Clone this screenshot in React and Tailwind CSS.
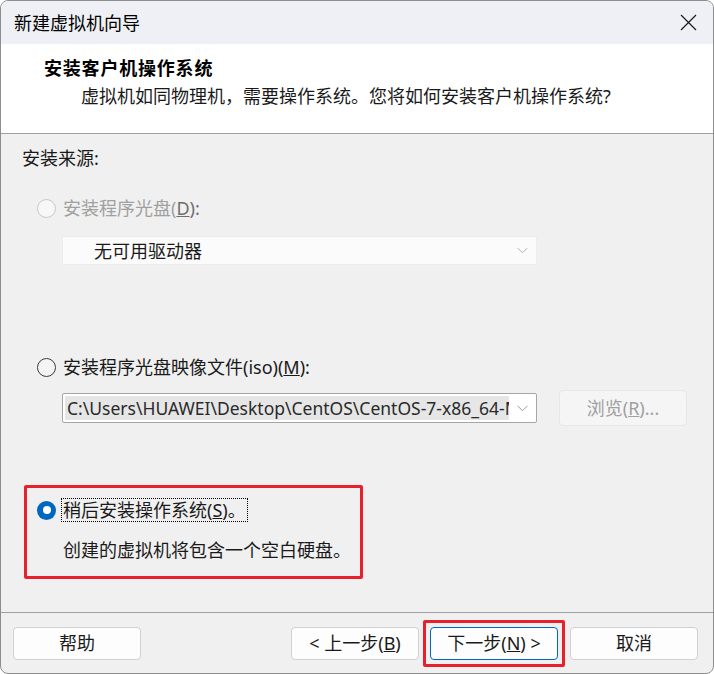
import React from "react";

const FONT = { fontFamily: '"Noto Sans", "Noto Sans CJK SC", sans-serif' };

function Radio({ state }) {
  if (state === "checked") {
    return (
      <div className="w-[19px] h-[19px] rounded-full bg-[#0067c0] flex items-center justify-center shrink-0">
        <div className="w-[8px] h-[8px] rounded-full bg-white" />
      </div>
    );
  }
  if (state === "disabled") {
    return <div className="w-[19px] h-[19px] rounded-full border border-[#c8c8c8] bg-[#f7f7f7] shrink-0" />;
  }
  return <div className="w-[19px] h-[19px] rounded-full border border-[#3a3a3a] bg-[#f4f4f4] shrink-0" />;
}

function Chevron({ color }) {
  return (
    <svg width="11" height="7" viewBox="0 0 11 7" className="shrink-0">
      <path d="M0.5 0.8 L5.5 5.8 L10.5 0.8" fill="none" stroke={color} strokeWidth="1" />
    </svg>
  );
}

function Btn({ children, cls = "" }) {
  return (
    <div
      className={
        "h-[33px] w-[128px] rounded-[4px] bg-[#fdfdfd] border flex items-center justify-center text-[18px] text-[#1a1a1a] shrink-0 " +
        cls
      }
    >
      {children}
    </div>
  );
}

export default function App() {
  return (
    <div className="w-[714px] h-[674px] bg-white" style={FONT}>
      <div className="w-[714px] h-[674px] rounded-[8px] border border-[#8e8e8e] overflow-hidden flex flex-col bg-[#f0f0f0]">
        {/* Title bar */}
        <div className="h-[43px] bg-[#eef0f5] flex items-center pl-[13px] pr-[16px] shrink-0">
          <div className="text-[18px] leading-[24px] text-black flex-1">新建虚拟机向导</div>
          <svg width="17" height="17" viewBox="0 0 17 17" className="mr-[0px]">
            <path d="M1 1 L16 16 M16 1 L1 16" stroke="#1a1a1a" strokeWidth="1.2" />
          </svg>
        </div>
        {/* Header */}
        <div className="h-[90px] bg-white border-b border-[#a0a0a0] shrink-0 pt-[12px]">
          <div className="pl-[43px] text-[18px] leading-[24px] font-bold text-black tracking-[0.8px]">
            安装客户机操作系统
          </div>
          <div className="pl-[80px] mt-[4px] text-[18px] leading-[24px] text-[#1a1a1a]">
            虚拟机如同物理机，需要操作系统。您将如何安装客户机操作系统?
          </div>
        </div>
        {/* Body */}
        <div className="flex-1 flex flex-col pt-[12px] text-[18px] leading-[24px] text-[#1a1a1a]">
          <div className="pl-[21px]">安装来源:</div>

          <div className="mt-[26px] pl-[36px] flex items-center gap-[7px] text-[#a0a0a0]">
            <Radio state="disabled" />
            <span>
              安装程序光盘(<span className="underline text-[#6e6e6e]">D</span>
              <span className="text-[#6e6e6e]">):</span>
            </span>
          </div>

          <div className="mt-[16px] ml-[61px] w-[475px] h-[29px] bg-[#fbfbfb] border border-[#ececec] flex items-center pl-[31px] pr-[8px]">
            <span className="flex-1 text-[#1a1a1a]">无可用驱动器</span>
            <Chevron color="#b4b4b4" />
          </div>

          <div className="mt-[90px] pl-[36px] flex items-center gap-[7px]">
            <Radio state="normal" />
            <span>
              安装程序光盘映像文件(iso)(<span className="underline">M</span>):
            </span>
          </div>

          <div className="mt-[11px] ml-[61px] flex items-center h-[36px]">
            <div className="w-[475px] h-[30px] bg-white border border-[#a6a6a6] rounded-[2px] flex items-center pl-[2px] pr-[8px]">
              <div className="w-[444px] h-[24px] bg-[#e6e6e6] overflow-hidden whitespace-nowrap text-[17.5px] leading-[24px] text-[#2a2a2a] pl-[2px]">
                C:\Users\HUAWEI\Desktop\CentOS\CentOS-7-x86_64-Minimal-2009.iso
              </div>
              <div className="flex-1" />
              <Chevron color="#9a9a9a" />
            </div>
            <div className="ml-[22px] w-[128px] h-[36px] rounded-[4px] bg-[#f5f5f5] border border-[#e6e6e6] flex items-center justify-center text-[#a0a0a0]">
              浏览(<span className="underline">R</span>)...
            </div>
          </div>

          <div className="mt-[59px] ml-[23px] w-[339px] h-[94px] border-[3px] border-[#e8202b] rounded-[2px] pt-[10px]">
            <div className="pl-[10px] flex items-center">
              <Radio state="checked" />
              <span className="ml-[5px] px-[1px] border border-dotted border-black leading-[22px]">
                稍后安装操作系统(<span className="underline">S</span>)。
              </span>
            </div>
            <div className="mt-[16px] pl-[36px]">创建的虚拟机将包含一个空白硬盘。</div>
          </div>
        </div>
        {/* Footer */}
        <div className="h-[61px] border-t border-[#a0a0a0] shrink-0 flex items-center pl-[12px] pr-[15px]">
          <Btn cls="border-[#d0d0d0] w-[127px]">帮助</Btn>
          <div className="flex-1" />
          <Btn cls="border-[#d0d0d0]">
            &lt; 上一步(<span className="underline">B</span>)
          </Btn>
          <div className="ml-[4px] border-[3px] border-[#e8202b] rounded-[2px] p-[4px]">
            <Btn cls="border-[#0067c0]">
              下一步(<span className="underline">N</span>) &gt;
            </Btn>
          </div>
          <div className="ml-[5px]">
            <Btn cls="border-[#d0d0d0] w-[127px]">取消</Btn>
          </div>
        </div>
      </div>
    </div>
  );
}
